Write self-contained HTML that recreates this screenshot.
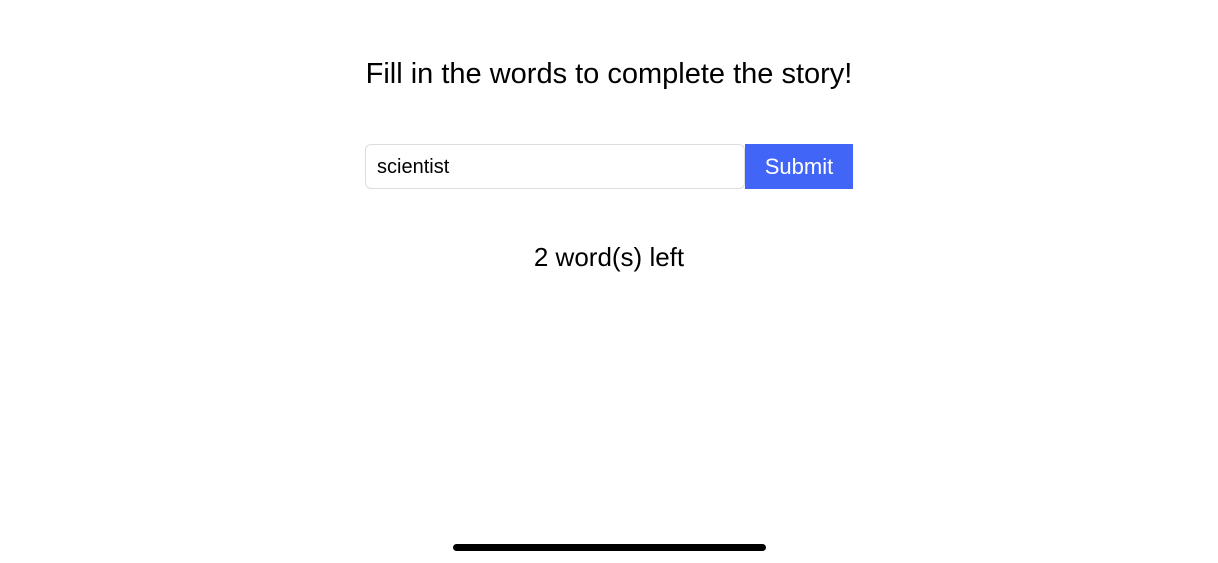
<!DOCTYPE html>
<html><head><style>
body{margin:0;width:1218px;height:563px;background:#fff;font-family:"Liberation Sans",sans-serif;position:relative;overflow:hidden;color:#000}
.t{position:absolute;left:0;width:1218px;text-align:center;top:56px;font-size:29px;line-height:36px}
.in{position:absolute;left:365px;top:144px;width:378px;height:43px;border:1px solid #ddd;border-radius:6px;box-sizing:content-box}
.in span{position:absolute;left:11px;top:10px;font-size:20px;line-height:24px}
.b{position:absolute;left:745px;top:144px;width:108px;height:45px;background:#4166f7;color:#fff;font-size:22px;line-height:45px;text-align:center}
.w{position:absolute;left:0;width:1218px;text-align:center;top:242px;font-size:26px;line-height:30px}
.h{position:absolute;left:453px;top:544px;width:313px;height:7px;border-radius:4px;background:#000}
</style></head><body>
<div class="t">Fill in the words to complete the story!</div>
<div class="in"><span>scientist</span></div>
<div class="b">Submit</div>
<div class="w">2 word(s) left</div>
<div class="h"></div>
</body></html>
